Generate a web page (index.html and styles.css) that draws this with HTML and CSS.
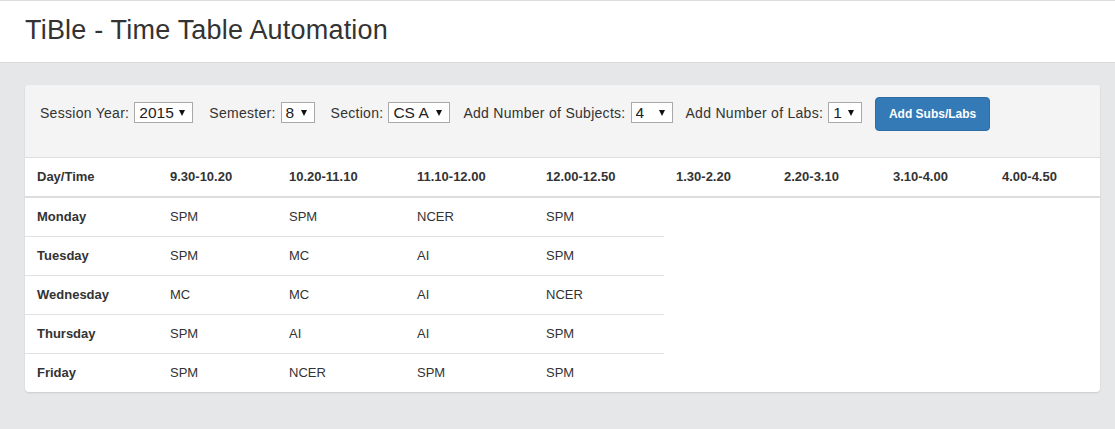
FILE: index.html
```html
<!DOCTYPE html>
<html lang="en">
<head>
<meta charset="utf-8">
<title>TiBle - Time Table Automation</title>
<link rel="stylesheet" href="styles.css">
</head>
<body>
<header class="topbar">
  <h1 class="title">TiBle - Time Table Automation</h1>
</header>
<main class="main">
  <section class="card">
    <form class="controls">
      <div class="field">
        <label class="field-label" for="year">Session Year:</label>
        <span class="select-wrap w-year"><select id="year" class="select"><option>2015</option></select></span>
      </div>
      <div class="field">
        <label class="field-label" for="sem">Semester:</label>
        <span class="select-wrap w-sem"><select id="sem" class="select"><option>8</option></select></span>
      </div>
      <div class="field">
        <label class="field-label" for="sec">Section:</label>
        <span class="select-wrap w-sec"><select id="sec" class="select"><option>CS A</option></select></span>
      </div>
      <div class="field">
        <label class="field-label" for="subs">Add Number of Subjects:</label>
        <span class="select-wrap w-subs"><select id="subs" class="select"><option>4</option></select></span>
      </div>
      <div class="field">
        <label class="field-label" for="labs">Add Number of Labs:</label>
        <span class="select-wrap w-labs"><select id="labs" class="select"><option>1</option></select></span>
      </div>
      <button type="button" class="btn">Add Subs/Labs</button>
    </form>
    <table class="timetable">
      <colgroup>
        <col class="c1"><col class="c2"><col class="c3"><col class="c4"><col class="c5">
        <col class="c6"><col class="c7"><col class="c8"><col class="c9">
      </colgroup>
      <thead>
        <tr>
          <th>Day/Time</th><th>9.30-10.20</th><th>10.20-11.10</th><th>11.10-12.00</th><th>12.00-12.50</th>
          <th>1.30-2.20</th><th>2.20-3.10</th><th>3.10-4.00</th><th>4.00-4.50</th>
        </tr>
      </thead>
      <tbody>
        <tr><td class="day">Monday</td><td>SPM</td><td>SPM</td><td>NCER</td><td>SPM</td></tr>
        <tr><td class="day">Tuesday</td><td>SPM</td><td>MC</td><td>AI</td><td>SPM</td></tr>
        <tr><td class="day">Wednesday</td><td>MC</td><td>MC</td><td>AI</td><td>NCER</td></tr>
        <tr><td class="day">Thursday</td><td>SPM</td><td>AI</td><td>AI</td><td>SPM</td></tr>
        <tr><td class="day">Friday</td><td>SPM</td><td>NCER</td><td>SPM</td><td>SPM</td></tr>
      </tbody>
    </table>
  </section>
</main>
</body>
</html>
```

FILE: styles.css
```css
* { box-sizing: border-box; }

html, body {
  margin: 0;
  padding: 0;
}

body {
  background: #e6e7e8;
  font-family: "Liberation Sans", Arial, sans-serif;
  color: #333;
  min-height: 429px;
}

.topbar {
  background: #fff;
  border-top: 1px solid #dcdcdc;
  border-bottom: 1px solid #dadada;
  height: 63px;
  padding: 0 25px;
  display: flex;
  align-items: center;
}

.title {
  margin: 0;
  font-size: 27px;
  font-weight: normal;
  color: #333;
  letter-spacing: 0.2px;
  line-height: 1;
  padding-bottom: 2px;
}

.main {
  padding: 22px 15px 30px 25px;
}

.card {
  background: #fff;
  border-radius: 4px;
  overflow: hidden;
  box-shadow: 0 1px 2px rgba(0, 0, 0, 0.12);
}

.controls {
  margin: 0;
  background: #f4f4f4;
  border-bottom: 1px solid #dddddd;
  padding: 12px 15px 26px 15px;
  display: flex;
  align-items: flex-start;
  height: 73px;
}

.field {
  display: flex;
  align-items: center;
  height: 21px;
  margin-top: 5px;
  margin-right: 13px;
}

.field:nth-child(1), .field:nth-child(2) { margin-right: 16px; }

.field-label {
  font-size: 14px;
  letter-spacing: 0.28px;
  color: #333;
  margin-right: 5px;
  white-space: nowrap;
}

.select-wrap {
  position: relative;
  display: inline-block;
  height: 21px;
}

.select-wrap::after {
  content: "";
  position: absolute;
  right: 8px;
  top: 8px;
  width: 0;
  height: 0;
  border-left: 3.5px solid transparent;
  border-right: 3.5px solid transparent;
  border-top: 6px solid #111;
  pointer-events: none;
}

.select {
  -webkit-appearance: none;
  appearance: none;
  height: 21px;
  width: 100%;
  border: 1px solid #a9a9a9;
  border-radius: 0;
  background: #fff;
  color: #222;
  font-family: "Liberation Sans", Arial, sans-serif;
  font-size: 15.5px;
  line-height: 19px;
  padding: 0 0 0 4px;
  margin: 0;
}

.w-year { width: 59px; }
.w-sem { width: 34px; }
.w-sec { width: 62px; }
.w-subs { width: 42px; }
.w-labs { width: 34px; }

.btn {
  background: #337ab7;
  border: 1px solid #2e6da4;
  border-radius: 4px;
  color: #fff;
  font-family: "Liberation Sans", Arial, sans-serif;
  font-size: 12px;
  font-weight: bold;
  height: 34px;
  width: 115px;
  padding: 0;
  line-height: 20px;
  cursor: pointer;
}

.timetable {
  width: 100%;
  border-collapse: collapse;
  table-layout: fixed;
  font-size: 13px;
  color: #333;
}

.c1 { width: 133px; }
.c2 { width: 119px; }
.c3 { width: 128px; }
.c4 { width: 129px; }
.c5 { width: 130px; }
.c6 { width: 108px; }
.c7 { width: 109px; }
.c8 { width: 109px; }
.c9 { width: 110px; }

.timetable th,
.timetable td {
  text-align: left;
  padding: 10px 12px;
  line-height: 18px;
  height: 38px;
  vertical-align: middle;
  white-space: nowrap;
}

.timetable th {
  font-weight: bold;
  border-bottom: 2px solid #dddddd;
}

.timetable tbody tr + tr td {
  border-top: 1px solid #e1e1e1;
}

.timetable td.day {
  font-weight: bold;
}
```
